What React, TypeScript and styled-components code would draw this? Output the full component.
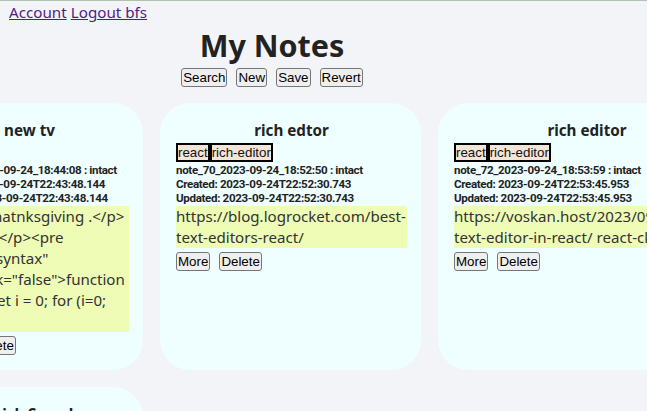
import React from "react";
import styled, { createGlobalStyle } from "styled-components";

const Global = createGlobalStyle`
  html, body {
    margin: 0;
    padding: 0;
    background: #f2f4f7;
    overflow: hidden;
  }
  body {
    font-family: "Noto Sans", "Open Sans", sans-serif;
    color: #222;
  }
`;

const Page = styled.div`
  border-top: 1px solid #b3c1b1;
  padding: 0 8px;
`;

const Nav = styled.nav`
  font-size: 15.2px;
  line-height: 22px;
  height: 22px;
  display: flex;
  gap: 4px;
  padding-left: 1px;
`;

const NavLink = styled.a`
  color: #551a8b;
  text-decoration: underline;
`;

const Header = styled.header`
  width: 528px;
  display: flex;
  flex-direction: column;
  align-items: center;
`;

const Title = styled.h1`
  margin: 0;
  font-size: 30.5px;
  line-height: 44px;
  font-weight: 700;
  color: #222;
`;

const Toolbar = styled.div`
  display: flex;
  gap: 9px;
  margin-top: 1px;
`;

const Btn = styled.button`
  font-family: "Liberation Sans", Arial, sans-serif;
  font-size: 13.33px;
  line-height: 15px;
  padding: 1px 1px;
  border: 1px solid #767676;
  border-radius: 3px;
  background: #efefef;
  color: #000;
`;

const Grid = styled.div`
  display: grid;
  grid-template-columns: 229px 261px 296px;
  column-gap: 17px;
  row-gap: 17px;
  margin: 16px 0 0 -94px;
`;

const Card = styled.section`
  background: #efffff;
  border-radius: 30px;
  padding: 16px 14px 15px 16px;
  display: flex;
  flex-direction: column;
  min-width: 0;
`;

const CardTitle = styled.h2`
  margin: 0;
  font-size: 15.2px;
  line-height: 22px;
  font-weight: 700;
  text-align: center;
  color: #222;
  white-space: nowrap;
`;

const Tags = styled.div`
  display: flex;
  margin-top: 2px;
  height: 19px;
`;

const Tag = styled.span`
  font-family: "Liberation Sans", Arial, sans-serif;
  font-size: 13.33px;
  line-height: 15px;
  border: 2px solid #000;
  background: #f3e5d8;
  color: #111;
`;

const Meta = styled.div`
  margin-top: 1px;
  font-family: Roboto, "Noto Sans", sans-serif;
  font-size: 11.6px;
  letter-spacing: -0.35px;
  font-weight: 700;
  line-height: 14px;
  color: #222;
  white-space: nowrap;
`;

const Body = styled.div`
  margin-top: 1px;
  background: #eefcb6;
  font-size: 15.1px;
  line-height: 21px;
  color: #333;
  white-space: pre-wrap;
  overflow-wrap: break-word;
`;

const Actions = styled.div`
  display: flex;
  gap: 9px;
  margin-top: 4px;
`;

type Note = {
  title: string;
  tags: string[];
  id: string;
  created: string;
  updated: string;
  body: string;
};

const notes: Note[] = [
  {
    title: "new tv",
    tags: ["tv"],
    id: "note_66_2023-09-24_18:44:08 : intact",
    created: "2023-09-24T22:43:48.144",
    updated: "2023-09-24T22:43:48.144",
    body:
      "<p>Hey thatnksgiving .</p>\n<p><br /></p><pre\nclass=\"ql-syntax\"\nspellcheck=\"false\">function\ncount() { let i = 0; for (i=0;\ni < 3;",
  },
  {
    title: "rich edtor",
    tags: ["react", "rich-editor"],
    id: "note_70_2023-09-24_18:52:50 : intact",
    created: "2023-09-24T22:52:30.743",
    updated: "2023-09-24T22:52:30.743",
    body: "https://blog.logrocket.com/best-text-editors-react/",
  },
  {
    title: "rich editor",
    tags: ["react", "rich-editor"],
    id: "note_72_2023-09-24_18:53:59 : intact",
    created: "2023-09-24T22:53:45.953",
    updated: "2023-09-24T22:53:45.953",
    body: "https://voskan.host/2023/09/07/rich-\ntext-editor-in-react/ react-ckeditor",
  },
  {
    title: "Quick Search",
    tags: ["search"],
    id: "note_74_2023-09-24_19:02:11 : intact",
    created: "2023-09-24T23:02:11.520",
    updated: "2023-09-24T23:02:11.520",
    body: "search notes by tag",
  },
];

function NoteCard({ note }: { note: Note }) {
  return (
    <Card>
      <CardTitle>{note.title}</CardTitle>
      <Tags>
        {note.tags.map((t) => (
          <Tag key={t}>{t}</Tag>
        ))}
      </Tags>
      <Meta>
        <div>{note.id}</div>
        <div>Created: {note.created}</div>
        <div>Updated: {note.updated}</div>
      </Meta>
      <Body>{note.body}</Body>
      <Actions>
        <Btn>More</Btn>
        <Btn>Delete</Btn>
      </Actions>
    </Card>
  );
}

export default function App() {
  return (
    <>
      <Global />
      <Page>
        <Nav>
          <NavLink href="#">Account</NavLink>
          <NavLink href="#">Logout bfs</NavLink>
        </Nav>
        <Header>
          <Title>My Notes</Title>
          <Toolbar>
            <Btn>Search</Btn>
            <Btn>New</Btn>
            <Btn>Save</Btn>
            <Btn>Revert</Btn>
          </Toolbar>
        </Header>
        <Grid>
          {notes.map((n) => (
            <NoteCard key={n.id} note={n} />
          ))}
        </Grid>
      </Page>
    </>
  );
}
